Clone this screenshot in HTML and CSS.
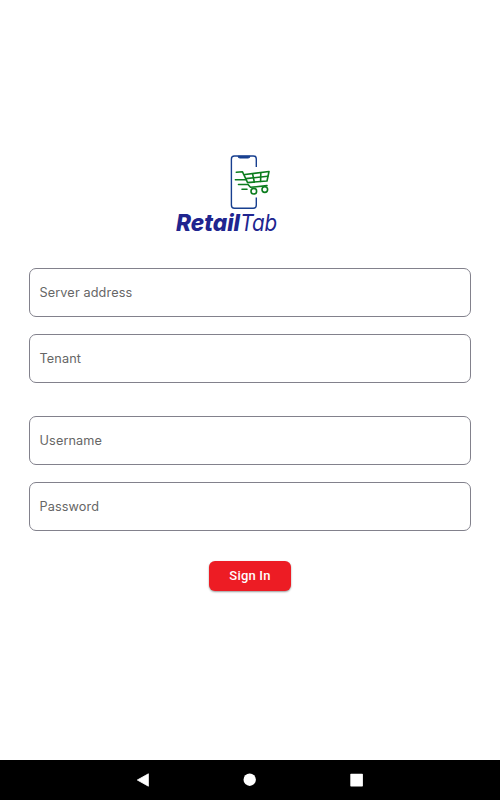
FILE: index.html
```html
<!DOCTYPE html>
<html lang="en">
<head>
<meta charset="utf-8">
<title>RetailTab</title>
<link rel="stylesheet" href="styles.css">
</head>
<body>
<main class="login">
  <svg class="logo" viewBox="170 150 115 90" role="img" aria-label="RetailTab">
    <g fill="none" stroke="#173f8f" stroke-width="1.4">
      <path d="M256.3 167V159Q256.3 156 253.3 156H234.4Q231.4 156 231.4 159V205Q231.4 208.2 234.4 208.2H253.3Q256.3 208.2 256.3 205V197.5"/>
      <path d="M238 156.3Q238 158 240 158H248Q250 158 250 156.3Z" fill="#173f8f" stroke-width="1"/>
    </g>
    <g fill="none" stroke="#0c7d1e" stroke-width="1.6" stroke-linecap="round" stroke-linejoin="round">
      <path d="M236.3 172.3L242.5 171.8L247.6 182.6L267 181L269 171.5L245 174.5"/>
      <path d="M246 178.6L267.8 176.3M235.4 179.7H246M238.5 184.5H248L250.5 187.3L267 185.6M242 189.2H247"/>
      <path d="M252.6 173.8L254.3 182M260.8 172.8L260.6 181.4"/>
      <circle cx="253.8" cy="191.2" r="2.8"/>
      <circle cx="264.8" cy="189.6" r="2.8"/>
    </g>
    <text class="logo-bold" x="176" y="230.6" textLength="64" lengthAdjust="spacingAndGlyphs">Retail</text>
    <text class="logo-light" x="240.2" y="230.6" textLength="37" lengthAdjust="spacingAndGlyphs">Tab</text>
  </svg>
  <form class="form">
    <div class="group">
      <div class="field">Server address</div>
      <div class="field">Tenant</div>
    </div>
    <div class="group">
      <div class="field">Username</div>
      <div class="field">Password</div>
    </div>
    <button class="submit" type="button">Sign In</button>
  </form>
</main>
<nav class="navbar">
  <svg class="nav-icon" viewBox="0 0 14 14"><path d="M1.3 7L12.4 .8V13.2Z" stroke="#fff" stroke-width=".8" stroke-linejoin="round"/></svg>
  <svg class="nav-icon" viewBox="0 0 14 14"><circle cx="6.7" cy="6.7" r="6.2"/></svg>
  <svg class="nav-icon" viewBox="0 0 14 14"><rect x=".3" y=".8" width="12.6" height="12.6" rx=".7"/></svg>
</nav>
</body>
</html>
```
FILE: styles.css
```css
* { box-sizing: border-box; }

body {
  margin: 0;
  height: 800px;
  display: flex;
  flex-direction: column;
  background: #fff;
  font-family: Inter, Roboto, sans-serif;
}

.login {
  flex: 1;
  display: flex;
  flex-direction: column;
  padding: 150px 29px 0;
}

.logo {
  width: 115px;
  height: 90px;
  margin-left: 141px;
}

.logo-bold,
.logo-light {
  fill: #20258f;
  font-family: Inter, sans-serif;
  font-size: 23.5px;
  font-style: italic;
}

.logo-bold { font-weight: 800; }
.logo-light { font-weight: 400; }

.form {
  display: flex;
  flex-direction: column;
  margin-top: 28px;
  gap: 33px;
}

.group {
  display: flex;
  flex-direction: column;
  gap: 17px;
}

.field {
  height: 49px;
  padding: 0 9.5px;
  border: 1px solid #82818c;
  border-radius: 7px;
  color: #666;
  font-size: 12.7px;
  line-height: 47px;
  letter-spacing: 0.12px;
}

.submit {
  align-self: center;
  width: 82px;
  height: 30px;
  margin-top: -3px;
  padding: 0;
  border: 0;
  border-radius: 6px;
  background: #ed1c24;
  box-shadow: 0 1px 2px rgba(0, 0, 0, 0.4);
  color: #fff;
  font: 500 13px/30px Roboto, sans-serif;
  letter-spacing: 0.2px;
}

.navbar {
  height: 40px;
  display: flex;
  justify-content: center;
  align-items: center;
  gap: 93px;
  background: #000;
}

.nav-icon {
  width: 14px;
  height: 14px;
  fill: #fff;
}
```
